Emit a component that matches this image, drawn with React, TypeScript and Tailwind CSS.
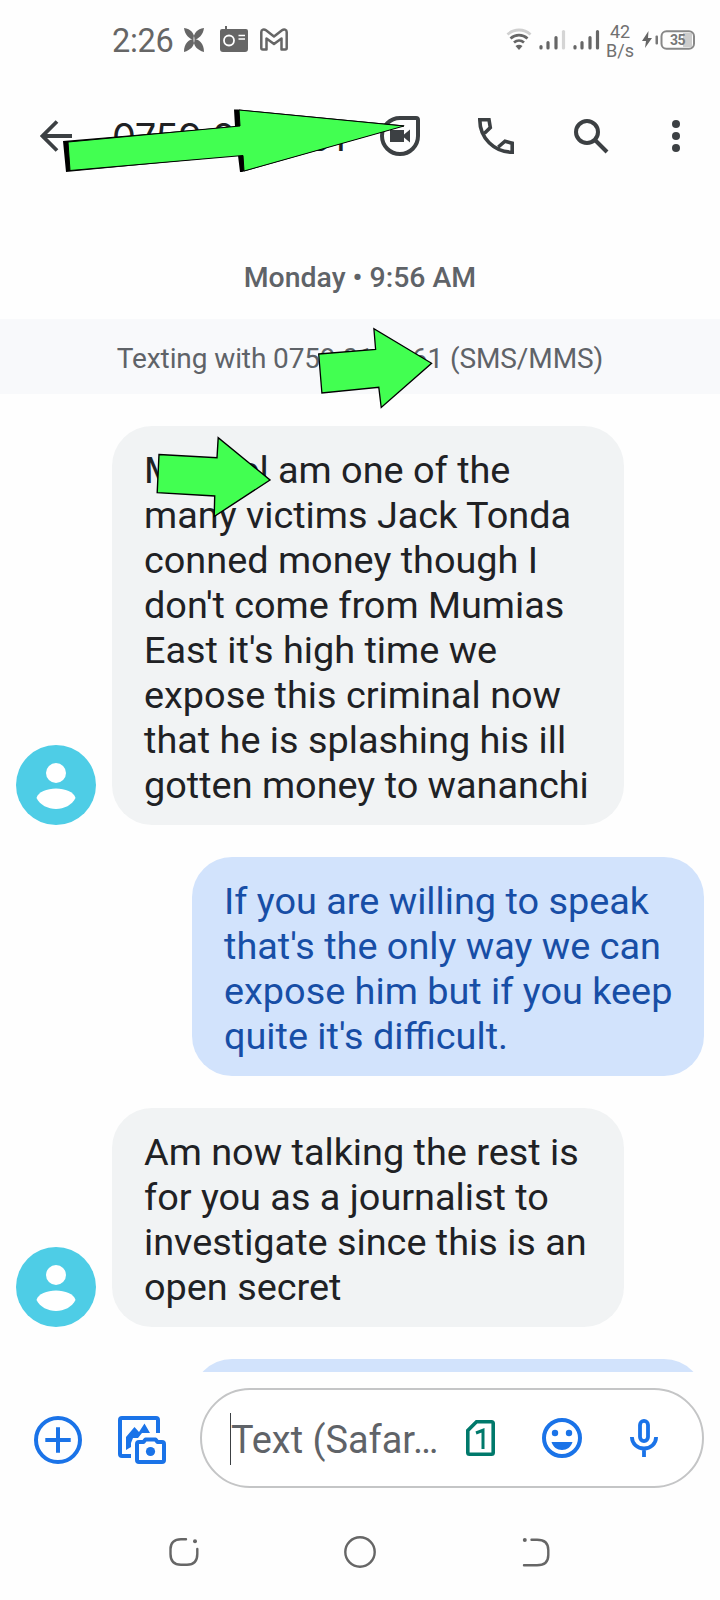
import React from "react";

const CONTACT = "0759 018 061";

function StatusBar() {
  return (
    <div className="flex h-20 shrink-0 items-center pl-[112px] pr-[24px] text-[#666]">
      <span className="mt-[2px] w-[62px] whitespace-nowrap text-[32.5px] leading-none tracking-[-0.3px]">2:26</span>
      <svg className="ml-[10px] h-6 w-5" viewBox="0 0 20 24" fill="#666">
        <path d="M0 0C7 1 10.500 5 10.500 12C5 11 1 7 0 0ZM20 0C13 1 9.500 5 9.500 12C15 11 19 7 20 0ZM0 24C0 15 5 11 10.500 11C10.500 18 7 22 0 24ZM20 24C20 15 15 11 9.500 11C9.500 18 13 22 20 24Z" />
      </svg>
      <svg className="ml-[16px] mt-[-2px] h-[26px] w-7" viewBox="0 0 28 26">
        <path fill="#666" d="M5 4V0h2v3h19a2 2 0 0 1 2 2v18a3 3 0 0 1-3 3H3a3 3 0 0 1-3-3V5a2 2 0 0 1 2-2h3z" />
        <circle cx="9" cy="14.500" r="5" fill="none" stroke="#fff" strokeWidth="1.800" />
        <path d="M18.500 9.500H25M18.500 13H25" stroke="#fff" strokeWidth="1.600" />
      </svg>
      <svg className="ml-[12px] mt-[-1px] h-[23px] w-[28px]" viewBox="0 0 28 23">
        <path fill="none" stroke="#666" strokeWidth="2.500" strokeLinejoin="round" d="M1.300 4C1.300 1.500 4 .8 6 2.300l8 6.200 8-6.200c2-1.500 4.700-.8 4.700 1.700V20a1.500 1.500 0 0 1-1.500 1.500H21.500V10.500L14 16l-7.500-5.500V21.500H2.800A1.500 1.500 0 0 1 1.300 20z" />
      </svg>
      <div className="flex-1" />
      <svg className="h-6 w-[26px]" viewBox="0 0 26 24" fill="none" strokeWidth="2.800">
        <path stroke="#d0d0d0" d="M1.500 6.500C8 .5 18 .5 24.500 6.500" />
        <path stroke="#666" d="M4.500 10.500C9.500 6 16.500 6 21.500 10.500M8 14.500C11 12 15 12 18 14.500" />
        <path fill="#666" d="M9.500 18q3.500-2.500 7 0L13 22z" />
      </svg>
      <svg className="ml-[7px] h-[22px] w-[27px]" viewBox="0 0 27 22" strokeWidth="3.200" strokeLinecap="round" stroke="#666">
        <path d="M2 17.500V19M9 13.500V19M17 8.500V19" />
        <path stroke="#d5d5d5" d="M24.500 2.500V19" />
      </svg>
      <svg className="ml-[7px] h-[22px] w-[27px]" viewBox="0 0 27 22" strokeWidth="3.200" strokeLinecap="round" stroke="#666">
        <path d="M2 17.500V19M9 13.500V19M17 8.500V19M24.500 2.500V19" />
      </svg>
      <div className="ml-[6px] mt-[2px] flex w-[28px] flex-col items-center text-[18px] leading-[19px] text-[#707070]">
        <span>42</span>
        <span>B/s</span>
      </div>
      <svg className="ml-[8px] h-5 w-[54px]" viewBox="0 0 54 20">
        <path fill="#666" d="M6.500 1L0 11h4L3 18 10 8H6z" />
        <rect x="13.500" y="5.500" width="2.500" height="9" rx="1" fill="#777" />
        <rect x="41" y="3" width="9" height="14" fill="#ccc" />
        <rect x="19.500" y="1.200" width="32.500" height="17.600" rx="5" fill="none" stroke="#888" strokeWidth="2" />
        <text x="28" y="15" fontSize="14" fontWeight="700" textLength="15.500" fill="#777">35</text>
      </svg>
    </div>
  );
}

function Header() {
  return (
    <header className="relative flex h-28 shrink-0 items-center pl-[40px] pr-[40px]">
      <svg className="h-8 w-8" viewBox="0 0 32 32" fill="none" stroke="#3c4043" strokeWidth="3.800">
        <path d="M32 16H3M17 1.500L2.500 16 17 30.500" />
      </svg>
      <h1 className="ml-[40px] mt-[2px] w-0 flex-1 whitespace-nowrap font-['Inter',sans-serif] text-[38px] leading-none tracking-[-0.4px] text-[#202124]">{CONTACT}</h1>
      <svg className="h-10 w-10" viewBox="0 0 40 40">
        <path d="M20 2h16a2 2 0 0 1 2 2v16A18 18 0 1 1 20 2z" fill="none" stroke="#3c4043" strokeWidth="4" />
        <path d="M10 14h14v4.500l6-5v13l-6-5V26H10z" fill="#3c4043" />
      </svg>
      <svg className="ml-[58px] h-9 w-9" viewBox="0 0 36 36" fill="none" stroke="#3c4043" strokeWidth="3.600">
        <path d="M20.300 29L27 23.200 34.200 25.200V34.200C16 34.200 1.800 20 1.800 1.800H11L12.300 9.500 6.500 15.200" />
      </svg>
      <svg className="ml-[60px] h-9 w-9" viewBox="0 0 36 36" fill="none" stroke="#3c4043" strokeWidth="4">
        <circle cx="13" cy="14" r="11" />
        <path d="M21.500 22.500L33 34" />
      </svg>
      <svg className="ml-[62px] h-8 w-2" viewBox="0 0 8 32" fill="#3c4043">
        <circle cx="4" cy="4" r="4" />
        <circle cx="4" cy="16" r="4" />
        <circle cx="4" cy="28" r="4" />
      </svg>
      <svg className="absolute left-[60px] top-[26px] h-[68px] w-[350px]" viewBox="60 106 350 68">
        <path fill="#000" d="M63 141L235 126.500 234 109.500H238L405 125.500 242 172H240L238 155.500 66 172Z" />
        <path fill="#42ff51" stroke="#000" strokeWidth="1" d="M68 142L240 126 239 110 404 126 244 171 243 155.500 70 170.500Z" />
      </svg>
    </header>
  );
}

function Avatar() {
  return (
    <svg className="h-20 w-20 shrink-0" viewBox="0 0 80 80">
      <circle cx="40" cy="40" r="40" fill="#4ecde6" />
      <circle cx="40" cy="28" r="10" fill="#fff" />
      <path d="M20.500 53C22 47 31 43.500 40 43.500S58 47 59.500 53C56 60 48 64 40 64S24 60 20.500 53z" fill="#fff" />
    </svg>
  );
}

function Bubble({ lines, own = false, children }: { lines: string[]; own?: boolean; children?: React.ReactNode }) {
  return (
    <div className={own ? "flex justify-end px-4" : "flex items-end gap-4 px-4"}>
      {!own && <Avatar />}
      <div
        className={
          own
            ? "relative w-[512px] rounded-[40px] bg-[#d2e3fc] px-8 pb-[17px] pt-[22px] text-[#174ea6]"
            : "relative w-[512px] rounded-[40px] bg-[#f1f3f4] px-8 pb-[17px] pt-[22px] text-[#202124]"
        }
      >
        <p className="whitespace-nowrap text-[37.85px] leading-[45px]">
          {lines.map((line) => (
            <span key={line} className="block">{line}</span>
          ))}
        </p>
        {children}
      </div>
    </div>
  );
}

function Composer() {
  return (
    <footer className="flex h-[128px] shrink-0 items-start bg-[#fefefe] pl-[34px] pr-4 pt-4">
      <svg className="mt-[28px] h-12 w-12" viewBox="0 0 48 48" fill="none" stroke="#1a73e8" strokeWidth="4">
        <circle cx="24" cy="24" r="22" />
        <path d="M11.300 24h25.400M24 11.300v25.400" />
      </svg>
      <svg className="ml-[36px] mt-[28px] h-12 w-12" viewBox="0 0 48 48" fill="none" stroke="#1a73e8" strokeWidth="4">
        <path d="M40 17V4a2 2 0 0 0-2-2H4a2 2 0 0 0-2 2v34a2 2 0 0 0 2 2h9" />
        <path fill="#1a73e8" stroke="none" d="M8 34V21L16.500 11 21 16 26.500 7.500 32 17H24L20 22H15L13 27V31z" />
        <path strokeLinejoin="round" d="M21 26h4.500l2-2.500h10l2 2.500H44a2 2 0 0 1 2 2v16a2 2 0 0 1-2 2H21a2 2 0 0 1-2-2V28a2 2 0 0 1 2-2z" />
        <circle cx="32.500" cy="35.500" r="4.600" fill="#1a73e8" stroke="none" />
      </svg>
      <div className="ml-[34px] flex h-[100px] flex-1 items-center rounded-full border-2 border-[#c4c5c6] bg-white pl-[28px] pr-[44px]">
        <div className="mt-[2px] flex h-[52px] w-0 flex-1 items-center border-l border-[#3c4043]">
          <span className="mt-[3px] whitespace-nowrap text-[37.900px] leading-none text-[#5f6368]">Text (Safar…</span>
        </div>
        <svg className="h-9 w-[29px]" viewBox="0 0 29 36">
          <path d="M10.500 1.800H25.500a1.700 1.700 0 0 1 1.700 1.700v29a1.700 1.700 0 0 1-1.700 1.700H3.500a1.700 1.700 0 0 1-1.700-1.700v-22z" fill="none" stroke="#00796b" strokeWidth="3.600" />
          <path d="M10 13L17 10.300V29" fill="none" stroke="#00796b" strokeWidth="3" />
        </svg>
        <svg className="ml-[47px] h-10 w-10" viewBox="0 0 40 40">
          <circle cx="20" cy="20" r="18" fill="none" stroke="#1a73e8" strokeWidth="4" />
          <circle cx="13" cy="15" r="3.200" fill="#1a73e8" />
          <circle cx="27" cy="15" r="3.200" fill="#1a73e8" />
          <path d="M9.500 24h21C29 29 25 32 20 32S11 29 9.500 24z" fill="#1a73e8" />
        </svg>
        <svg className="ml-[48px] h-[38px] w-7" viewBox="0 0 28 38" fill="none" stroke="#1a73e8" strokeWidth="3.800">
          <rect x="10" y="1.900" width="8" height="20.200" rx="4" />
          <path d="M1.900 18C2 25 7.500 29.500 14 29.500S26 25 26.100 18M14 29v9" />
        </svg>
      </div>
    </footer>
  );
}

function NavBar() {
  return (
    <nav className="flex flex-1 items-center justify-between bg-[#fefefe] pl-[169px] pr-[170px] pt-1">
      <svg className="h-8 w-[30px]" viewBox="0 0 30 32" fill="none" stroke="#666" strokeWidth="2.400" strokeLinecap="round">
        <path d="M17 3.200H12C5 3.200 1.500 7 1.500 13v5C1.500 25 5 28.800 12 28.800h6C25 28.800 28.300 25 28.300 18V13" />
        <circle cx="26" cy="5.200" r="2" fill="#666" stroke="none" />
      </svg>
      <svg className="mr-[2px] h-8 w-8" viewBox="0 0 32 32" fill="none" stroke="#666" strokeWidth="2.400">
        <circle cx="16" cy="16" r="14.700" />
      </svg>
      <svg className="h-8 w-7" viewBox="0 0 28 32" fill="none" stroke="#666" strokeWidth="2.400" strokeLinecap="round">
        <path d="M9.500 3.800H15C23 3.800 26.300 8 26.300 14v5C26.300 25 23 29.300 15 29.300H2" />
        <circle cx="2.800" cy="4" r="2" fill="#666" stroke="none" />
      </svg>
    </nav>
  );
}

export default function App() {
  return (
    <div className="flex h-[1600px] w-[720px] flex-col overflow-hidden bg-[#fefefe] font-['Roboto',sans-serif]">
      <StatusBar />
      <Header />
      <main className="h-[1180px] shrink-0 overflow-hidden">
        <div className="mt-[70px] text-center text-[28.4px] font-medium leading-8 text-[#5f6368]">Monday • 9:56 AM</div>
        <div className="relative mt-[25px] flex h-[75px] items-center justify-center bg-[#f8f9fb] pt-[5px] text-[28px] tracking-[-0.1px] text-[#5f6368]">
          Texting with {CONTACT} (SMS/MMS)
          <svg className="absolute left-[316px] top-[6px] h-[86px] w-[120px]" viewBox="316 325 120 86">
            <path fill="#42ff51" stroke="#000" strokeWidth="1.300" d="M318.700 354L375.600 349.300 373.900 328.800 431.600 363.300 381.200 407.500 378.800 387.300 321.900 393Z" />
          </svg>
        </div>
        <div className="mt-8 flex flex-col gap-8">
          <Bubble
            lines={["Manuel am one of the", "many victims Jack Tonda", "conned money though I", "don't come from Mumias", "East it's high time we", "expose this criminal now", "that he is splashing his ill", "gotten money to wananchi"]}
          >
            <svg className="absolute left-[42px] top-[8px] h-[86px] w-[120px]" viewBox="154 434 120 86">
              <path fill="#42ff51" stroke="#000" strokeWidth="1.400" d="M159 454.500L217 457.700 218.200 437.700 270 480 214.200 516.500 214.700 496 157.200 492.700Z" />
            </svg>
          </Bubble>
          <Bubble own lines={["If you are willing to speak", "that's the only way we can", "expose him but if you keep", "quite it's difficult."]} />
          <Bubble lines={["Am now talking the rest is", "for you as a journalist to", "investigate since this is an", "open secret"]} />
          <div className="flex justify-end px-4">
            <div className="h-[120px] w-[512px] rounded-[40px] bg-[#d2e3fc]" />
          </div>
        </div>
      </main>
      <Composer />
      <NavBar />
    </div>
  );
}
